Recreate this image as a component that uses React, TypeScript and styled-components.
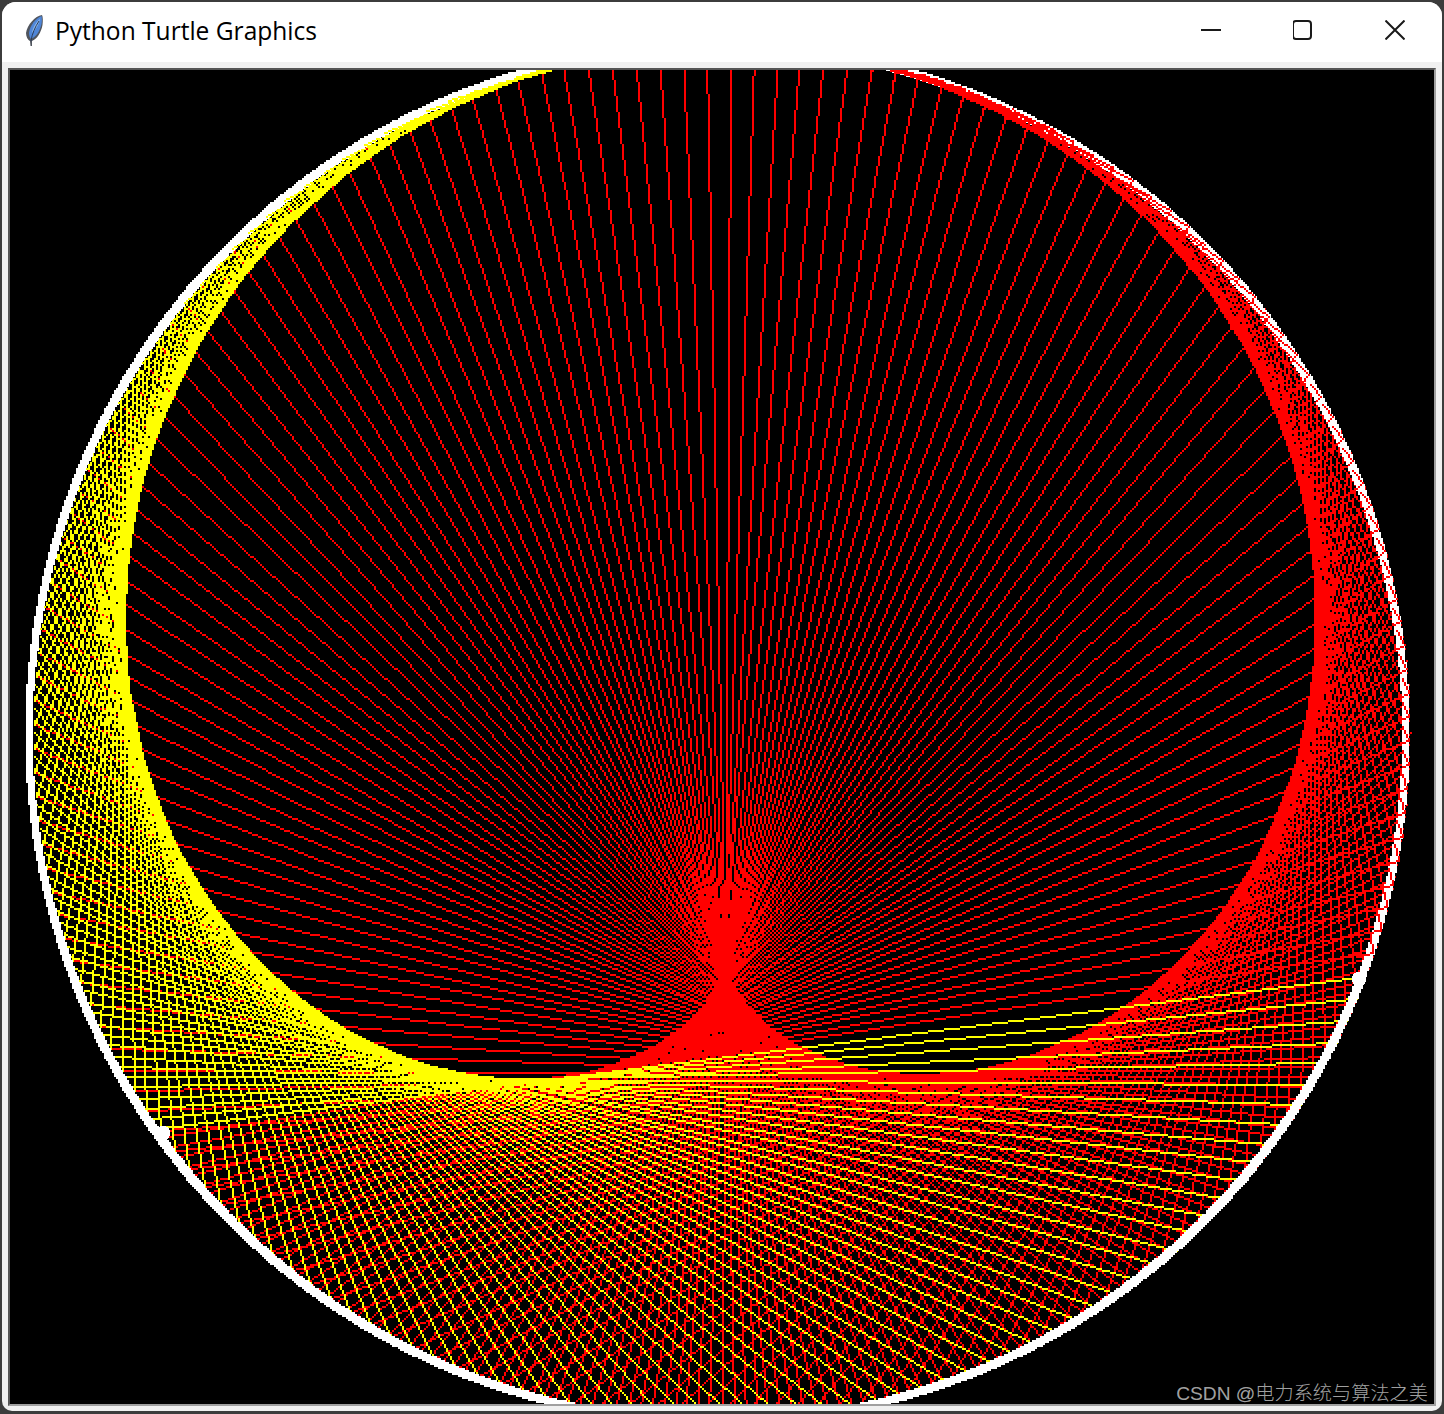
import React, { FC, useMemo } from "react";
import styled, { createGlobalStyle } from "styled-components";

// canvas is 1424x1334 on screen, the turtle image is 2x upscaled
const VIEW_W = 712;
const VIEW_H = 667;

// all in logical (half) pixels, relative to the black canvas
const CHORD_CX = (721 - 10) / 2;
const CHORD_CY = (732.5 - 70) / 2;
const CHORD_R = 688 / 2;
const RING_CX = (717.5 - 10) / 2;
const RING_CY = (733.5 - 70) / 2;
const RING_R = 688.5 / 2;
const RING_PEN = 3.5;

// the far end of every chord sits a bit off the whole degree
const FAR_END_SHIFT = 0.67;
const LAST_TURN = 125;
const TAIL = 8;

type Point = [number, number];

const onCircle = (deg: number): Point => {
  const a = (deg * Math.PI) / 180;
  return [CHORD_CX + CHORD_R * Math.sin(a), CHORD_CY - CHORD_R * Math.cos(a)];
};

// bresenham as run-length rects, so lines stay blocky like the tk canvas
const rasterLine = (from: Point, to: Point): string => {
  const x0 = Math.round(from[0]);
  const y0 = Math.round(from[1]);
  const x1 = Math.round(to[0]);
  const y1 = Math.round(to[1]);
  const dx = Math.abs(x1 - x0);
  const dy = Math.abs(y1 - y0);
  const parts: string[] = [];

  if (dx >= dy) {
    const sx = x1 >= x0 ? 1 : -1;
    let runStart = x0;
    let lastY = y0;
    for (let i = 0; i <= dx; i++) {
      const x = x0 + sx * i;
      const y = dx === 0 ? y0 : Math.round(y0 + ((y1 - y0) * i) / dx);
      if (y !== lastY) {
        const left = Math.min(runStart, x - sx);
        parts.push(`M${left} ${lastY}h${Math.abs(x - sx - runStart) + 1}v1H${left}z`);
        runStart = x;
        lastY = y;
      }
    }
    const left = Math.min(runStart, x1);
    parts.push(`M${left} ${lastY}h${Math.abs(x1 - runStart) + 1}v1H${left}z`);
  } else {
    const sy = y1 >= y0 ? 1 : -1;
    let runStart = y0;
    let lastX = x0;
    for (let i = 0; i <= dy; i++) {
      const y = y0 + sy * i;
      const x = Math.round(x0 + ((x1 - x0) * i) / dy);
      if (x !== lastX) {
        const top = Math.min(runStart, y - sy);
        parts.push(`M${lastX} ${top}h1v${Math.abs(y - sy - runStart) + 1}h-1z`);
        runStart = y;
        lastX = x;
      }
    }
    const top = Math.min(runStart, y1);
    parts.push(`M${lastX} ${top}h1v${Math.abs(y1 - runStart) + 1}h-1z`);
  }
  return parts.join("");
};

const chord = (deg: number) => rasterLine(onCircle(deg), onCircle(deg * 2 + FAR_END_SHIFT));

// just the last bit of a chord, for ends that were drawn after the ring got there
const chordTail = (deg: number) => {
  const from = onCircle(deg);
  const to = onCircle(deg * 2 + FAR_END_SHIFT);
  const len = Math.hypot(to[0] - from[0], to[1] - from[1]) || 1;
  const t = Math.max(0, 1 - TAIL / len);
  const start: Point = [from[0] + (to[0] - from[0]) * t, from[1] + (to[1] - from[1]) * t];
  return rasterLine(start, to);
};

const buildChords = () => {
  let red = "";
  let yellow = "";
  let redOver = "";
  let yellowOver = "";
  // clockwise from the top; the pen turns yellow where the run stopped
  for (let deg = 0; deg < 360 - LAST_TURN; deg++) {
    red += chord(deg);
    if (deg >= 180) redOver += chordTail(deg);
    else if (deg < 30) redOver += chord(deg);
    else if (deg < 55) redOver += chordTail(deg);
  }
  for (let deg = 360 - LAST_TURN; deg <= 360; deg++) {
    yellow += chord(deg);
    if (deg >= 345) yellowOver += chord(deg);
    else if (deg >= 315) yellowOver += chordTail(deg);
  }
  return { red, yellow, redOver, yellowOver };
};

const buildRing = () => {
  const seen = new Set<string>();
  let ring = "";
  for (let deg = 0; deg < 360; deg += 0.05) {
    const a = (deg * Math.PI) / 180;
    const x = Math.round(RING_CX + RING_R * Math.sin(a) - RING_PEN / 2);
    const y = Math.round(RING_CY - RING_R * Math.cos(a) - RING_PEN / 2);
    const key = `${x},${y}`;
    if (!seen.has(key)) {
      seen.add(key);
      ring += `M${x} ${y}h${RING_PEN}v${RING_PEN}h-${RING_PEN}z`;
    }
  }
  return ring;
};

const FeatherIcon: FC = () => (
  <svg width="24" height="34" viewBox="0 0 24 34">
    <path
      d="M21 2 C14 3 6 12 5 20 C5 24 7 27 9 28 L9.5 33 L11 33 L11 28 C16 26 20 20 21.5 12 C22 8 22 4 21 2 Z"
      fill="#50555e"
    />
    <path
      d="M20.5 3 C15 5 9 12 8 20 C8 23 9 25 10 26 C15 24 19 18 20.5 11 C21 8 21 5 20.5 3 Z"
      fill="#4f86d8"
    />
    <path d="M19 6 C15 9 12 14 11 20 C14 17 18 12 19 6 Z" fill="#8ab8f0" />
    <path d="M18 8 C14 14 11 21 10 28" fill="none" stroke="#2a3a55" strokeWidth="1" />
  </svg>
);

const MinimizeIcon: FC = () => (
  <svg width="20" height="20" viewBox="0 0 20 20">
    <path d="M0 10 H20" stroke="#1a1a1a" strokeWidth="2" />
  </svg>
);

const MaximizeIcon: FC = () => (
  <svg width="20" height="20" viewBox="1 0 20 20">
    <rect x="1" y="1" width="18" height="18" rx="3" fill="none" stroke="#1a1a1a" strokeWidth="2" />
  </svg>
);

const CloseIcon: FC = () => (
  <svg width="20" height="20" viewBox="0 0 20 20">
    <path d="M0.5 0.5 L19.5 19.5 M19.5 0.5 L0.5 19.5" stroke="#1a1a1a" strokeWidth="2" />
  </svg>
);

const TurtleDrawing: FC = () => {
  const { red, yellow, redOver, yellowOver, ring } = useMemo(
    () => ({ ...buildChords(), ring: buildRing() }),
    []
  );
  return (
    <svg width="1424" height="1334" viewBox={`0 0 ${VIEW_W} ${VIEW_H}`} shapeRendering="crispEdges">
      <path d={red} fill="#ff0000" />
      <path d={yellow} fill="#ffff00" />
      <path d={ring} fill="#ffffff" />
      <path d={redOver} fill="#ff0000" />
      <path d={yellowOver} fill="#ffff00" />
      <rect x="73" y="528" width="7" height="7" rx="3" fill="#ffffff" />
      <rect x="671" y="451" width="7" height="7" rx="3" fill="#ffffff" />
    </svg>
  );
};

const App: FC = () => {
  return (
    <Screen>
      <GlobalStyle />
      <Win>
        <TitleBar>
          <AppIcon>
            <FeatherIcon />
          </AppIcon>
          <Title>Python Turtle Graphics</Title>
          <Controls>
            <ControlButton>
              <MinimizeIcon />
            </ControlButton>
            <ControlButton>
              <MaximizeIcon />
            </ControlButton>
            <ControlButton>
              <CloseIcon />
            </ControlButton>
          </Controls>
        </TitleBar>
        <CanvasArea>
          <Canvas>
            <TurtleDrawing />
            <Watermark>CSDN @电力系统与算法之美</Watermark>
          </Canvas>
        </CanvasArea>
      </Win>
    </Screen>
  );
};

export default App;

const GlobalStyle = createGlobalStyle`
  html, body {
    margin: 0;
    padding: 0;
    background: #3c3c3c;
  }
`;

const Screen = styled.div`
  box-sizing: border-box;
  width: 1444px;
  height: 1414px;
  padding: 2px 2px 3px;
`;

const Win = styled.div`
  display: flex;
  flex-direction: column;
  height: 100%;
  border-radius: 14px 14px 10px 10px;
  overflow: hidden;
  background: #f0f0f0;
`;

const TitleBar = styled.div`
  display: flex;
  align-items: center;
  flex: none;
  box-sizing: border-box;
  height: 60px;
  padding: 0 0 4px 19px;
  background: #ffffff;
`;

const AppIcon = styled.div`
  display: flex;
  width: 34px;

  & svg {
    display: block;
  }
`;

const Title = styled.div`
  font-family: "Open Sans", "Noto Sans", sans-serif;
  font-size: 24.55px;
  color: #000000;
  white-space: nowrap;
`;

const Controls = styled.div`
  display: flex;
  margin-left: auto;
  padding-right: 1px;
`;

const ControlButton = styled.div`
  display: flex;
  align-items: center;
  justify-content: center;
  width: 92px;
  height: 56px;
`;

const CanvasArea = styled.div`
  flex: 1;
  padding: 6px 6px 5px;
`;

const Canvas = styled.div`
  position: relative;
  width: 1424px;
  height: 1334px;
  overflow: hidden;
  background: #000000;
  border-style: solid;
  border-width: 2px;
  border-color: #555555 #a0a0a0 #a0a0a0 #555555;

  & svg {
    display: block;
  }
`;

const Watermark = styled.div`
  position: absolute;
  right: 6px;
  bottom: -2px;
  font-family: "Liberation Sans", "Noto Sans CJK SC", sans-serif;
  font-size: 19.2px;
  font-weight: 300;
  line-height: 24px;
  color: rgba(255, 255, 255, 0.65);
  white-space: nowrap;
`;
